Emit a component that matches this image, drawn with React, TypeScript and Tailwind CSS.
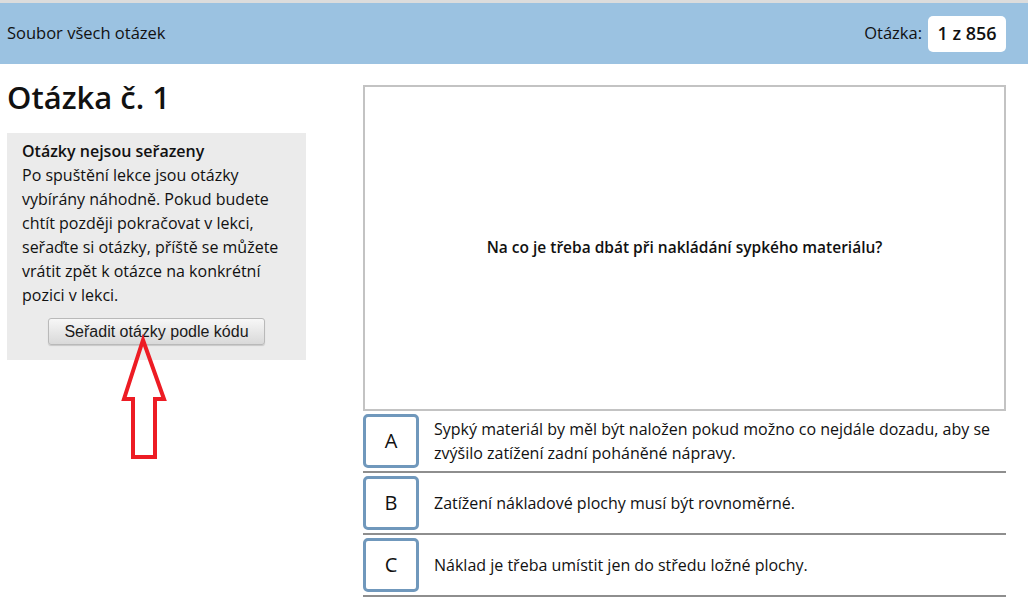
import React from 'react';

const answers = [
  { letter: 'A', text: 'Sypký materiál by měl být naložen pokud možno co nejdále dozadu, aby se zvýšilo zatížení zadní poháněné nápravy.' },
  { letter: 'B', text: 'Zatížení nákladové plochy musí být rovnoměrné.' },
  { letter: 'C', text: 'Náklad je třeba umístit jen do středu ložné plochy.' },
];

const App: React.FC = () => {
  return (
    <div className="relative w-[1028px] h-[608px] bg-white text-[#111] font-['Open_Sans',sans-serif] overflow-hidden">
      {/* Header */}
      <div className="border-t-[3px] border-[#dcdcdc] bg-[#9bc2e1] h-[64px] flex items-center justify-between pl-[7px] pr-[22px]">
        <span className="text-[16.5px]">Soubor všech otázek</span>
        <div className="flex items-center gap-[6px]">
          <span className="text-[16.5px]">Otázka:</span>
          <span className="bg-white rounded-[5px] h-[36px] w-[78px] flex items-center justify-center text-[18px] font-semibold">
            1 z 856
          </span>
        </div>
      </div>

      <div className="flex pl-[7px] pr-[22px]">
        {/* Left column */}
        <div className="w-[299px] shrink-0">
          <h1 className="mt-[12px] mb-[15px] text-[31px] leading-[42px] font-semibold">Otázka č. 1</h1>
          <div className="bg-[#ebebeb] pt-[6px] pb-[15px] px-[15px] text-[16px] leading-[24px]">
            <div className="font-semibold">Otázky nejsou seřazeny</div>
            <p>
              Po spuštění lekce jsou otázky vybírány náhodně. Pokud budete chtít později pokračovat v lekci, seřaďte si
              otázky, příště se můžete vrátit zpět k otázce na konkrétní pozici v lekci.
            </p>
            <div className="flex justify-center mt-[11px]">
              <button className="w-[217px] h-[27px] rounded-[3px] border border-[#b9b9b9] bg-gradient-to-b from-[#f7f7f7] to-[#d9d9d9] font-['Liberation_Sans',Arial,sans-serif] font-normal text-[16px] leading-none text-[#1a1a1a] shadow-[0_1px_1px_rgba(0,0,0,0.15)]">
                Seřadit otázky podle kódu
              </button>
            </div>
          </div>
        </div>

        {/* Right column */}
        <div className="ml-[57px] flex-1 pt-[21px]">
          <div className="h-[326px] border-2 border-[#c3c3c3] flex items-center justify-center">
            <span className="text-[15.5px] font-semibold">Na co je třeba dbát při nakládání sypkého materiálu?</span>
          </div>
          {answers.map((a) => (
            <div key={a.letter} className="flex items-center pt-[3px] pb-[3px] border-b-2 border-[#8e8e8e]">
              <div className="w-[56px] h-[54px] shrink-0 border-[3px] border-[#7098bc] rounded-[5px] flex items-center justify-center text-[20px]">
                {a.letter}
              </div>
              <div className="ml-[15px] pr-[8px] text-[16px] leading-[24px]">{a.text}</div>
            </div>
          ))}
        </div>
      </div>

      {/* Red arrow annotation */}
      <svg className="absolute left-[118px] top-[334px]" width="54" height="130" viewBox="0 0 54 130">
        <polygon
          points="25,6 6,65 15,65 15,123 37,123 37,65 46,65"
          fill="none"
          stroke="#ed1c24"
          strokeWidth="4"
          strokeLinejoin="miter"
        />
      </svg>
    </div>
  );
};

export default App;
